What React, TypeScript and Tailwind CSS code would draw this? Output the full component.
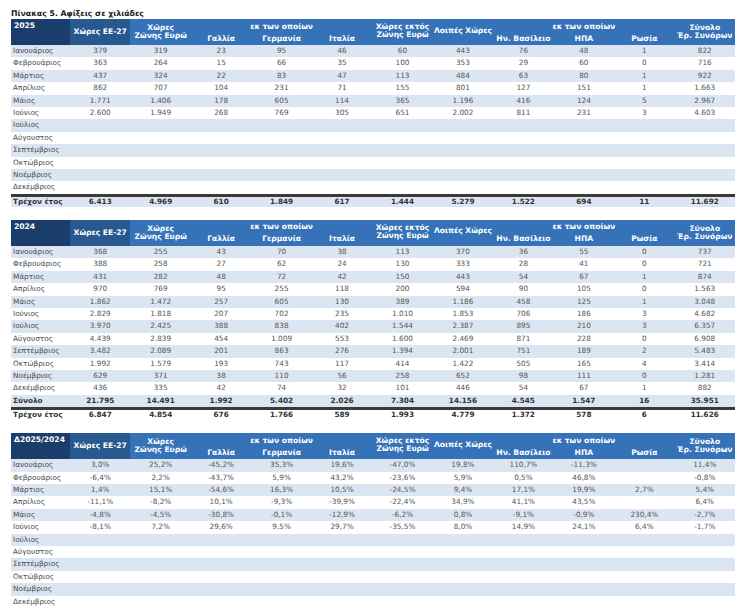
import React from "react";

type Row = { name: string; values: string[]; bold?: boolean; thickTop?: boolean };

const months = [
  "Ιανουάριος",
  "Φεβρουάριος",
  "Μάρτιος",
  "Απρίλιος",
  "Μάιος",
  "Ιούνιος",
  "Ιούλιος",
  "Αύγουστος",
  "Σεπτέμβριος",
  "Οκτώβριος",
  "Νοέμβριος",
  "Δεκέμβριος",
];

function withMonths(data: string[][]): Row[] {
  return months.map((m, i) => ({ name: m, values: data[i] ?? Array(11).fill("") }));
}

const rows2025: Row[] = [
  ...withMonths([
    ["379", "319", "23", "95", "46", "60", "443", "76", "48", "1", "822"],
    ["363", "264", "15", "66", "35", "100", "353", "29", "60", "0", "716"],
    ["437", "324", "22", "83", "47", "113", "484", "63", "80", "1", "922"],
    ["862", "707", "104", "231", "71", "155", "801", "127", "151", "1", "1.663"],
    ["1.771", "1.406", "178", "605", "114", "365", "1.196", "416", "124", "5", "2.967"],
    ["2.600", "1.949", "268", "769", "305", "651", "2.002", "811", "231", "3", "4.603"],
  ]),
  {
    name: "Τρέχον έτος",
    values: ["6.413", "4.969", "610", "1.849", "617", "1.444", "5.279", "1.522", "694", "11", "11.692"],
    bold: true,
    thickTop: true,
  },
];

const rows2024: Row[] = [
  ...withMonths([
    ["368", "255", "43", "70", "38", "113", "370", "36", "55", "0", "737"],
    ["388", "258", "27", "62", "24", "130", "333", "28", "41", "0", "721"],
    ["431", "282", "48", "72", "42", "150", "443", "54", "67", "1", "874"],
    ["970", "769", "95", "255", "118", "200", "594", "90", "105", "0", "1.563"],
    ["1.862", "1.472", "257", "605", "130", "389", "1.186", "458", "125", "1", "3.048"],
    ["2.829", "1.818", "207", "702", "235", "1.010", "1.853", "706", "186", "3", "4.682"],
    ["3.970", "2.425", "388", "838", "402", "1.544", "2.387", "895", "210", "3", "6.357"],
    ["4.439", "2.839", "454", "1.009", "553", "1.600", "2.469", "871", "228", "0", "6.908"],
    ["3.482", "2.089", "201", "863", "276", "1.394", "2.001", "751", "189", "2", "5.483"],
    ["1.992", "1.579", "193", "743", "117", "414", "1.422", "505", "165", "4", "3.414"],
    ["629", "371", "38", "110", "56", "258", "652", "98", "111", "0", "1.281"],
    ["436", "335", "42", "74", "32", "101", "446", "54", "67", "1", "882"],
  ]),
  {
    name: "Σύνολο",
    values: ["21.795", "14.491", "1.992", "5.402", "2.026", "7.304", "14.156", "4.545", "1.547", "16", "35.951"],
    bold: true,
  },
  {
    name: "Τρέχον έτος",
    values: ["6.847", "4.854", "676", "1.766", "589", "1.993", "4.779", "1.372", "578", "6", "11.626"],
    bold: true,
    thickTop: true,
  },
];

const rowsDelta: Row[] = withMonths([
  ["3,0%", "25,2%", "-45,2%", "35,3%", "19,6%", "-47,0%", "19,8%", "110,7%", "-11,3%", "", "11,4%"],
  ["-6,4%", "2,2%", "-43,7%", "5,9%", "43,2%", "-23,6%", "5,9%", "0,5%", "46,8%", "", "-0,8%"],
  ["1,4%", "15,1%", "-54,6%", "16,3%", "10,5%", "-24,5%", "9,4%", "17,1%", "19,9%", "2,7%", "5,4%"],
  ["-11,1%", "-8,2%", "10,1%", "-9,3%", "-39,9%", "-22,4%", "34,9%", "41,1%", "43,5%", "", "6,4%"],
  ["-4,8%", "-4,5%", "-30,8%", "-0,1%", "-12,9%", "-6,2%", "0,8%", "-9,1%", "-0,9%", "230,4%", "-2,7%"],
  ["-8,1%", "7,2%", "29,6%", "9,5%", "29,7%", "-35,5%", "8,0%", "14,9%", "24,1%", "6,4%", "-1,7%"],
]);

function ArrivalsTable({ label, rows }: { label: string; rows: Row[] }) {
  const th = "bg-[#3572b8] text-white font-bold text-center align-middle p-0 leading-[8px] text-[7.6px]";
  return (
    <table className="w-[724px] table-fixed border-collapse text-[7.3px]">
      <colgroup>
        <col className="w-[59px]" />
        {Array.from({ length: 11 }).map((_, i) => (
          <col key={i} />
        ))}
      </colgroup>
      <thead>
        <tr className="h-[13px]">
          <th
            rowSpan={2}
            className="bg-[#1b3d6b] text-white font-bold text-left align-top pl-[3px] pt-[3px] leading-[8px] text-[7.6px]"
          >
            {label}
          </th>
          <th rowSpan={2} className={`${th} bg-[#27598f]`}>
            Χώρες ΕΕ-27
          </th>
          <th rowSpan={2} className={th}>
            Χώρες
            <br />
            Ζώνης Ευρώ
          </th>
          <th colSpan={3} className={`${th} pt-[2px]`}>
            εκ των οποίων
          </th>
          <th rowSpan={2} className={`${th} pb-[2px]`}>
            Χώρες εκτός
            <br />
            Ζώνης Ευρώ
          </th>
          <th rowSpan={2} className={`${th} pb-[3px]`}>
            Λοιπές Χώρες
          </th>
          <th colSpan={3} className={`${th} pt-[2px]`}>
            εκ των οποίων
          </th>
          <th rowSpan={2} className={th}>
            Σύνολο
            <br />
            Έρ. Συνόρων
          </th>
        </tr>
        <tr className="h-[13px]">
          <th className={th}>Γαλλία</th>
          <th className={th}>Γερμανία</th>
          <th className={th}>Ιταλία</th>
          <th className={th}>Ην. Βασίλειο</th>
          <th className={th}>ΗΠΑ</th>
          <th className={th}>Ρωσία</th>
        </tr>
      </thead>
      <tbody>
        {rows.map((r, i) => {
          const stripe = i % 2 === 0 ? "bg-[#dce6f2]" : "bg-white";
          const h = r.thickTop ? "h-[10px] leading-[10px]" : "h-[12.4px] leading-[12.4px]";
          return (
            <React.Fragment key={r.name}>
              {r.thickTop && (
                <tr>
                  <td colSpan={12} className="h-[3px] p-0 bg-[#3a3a3a]" />
                </tr>
              )}
              <tr className={`${stripe} ${r.bold ? "font-bold text-[#333]" : "text-[#555]"}`}>
                <td className={`${h} p-0 pl-[2px] text-left whitespace-nowrap ${r.bold ? "text-[#333]" : "text-[#4a4a4a]"}`}>
                  {r.name}
                </td>
                {r.values.map((v, j) => (
                  <td key={j} className={`${h} p-0 text-center whitespace-nowrap`}>
                    {v}
                  </td>
                ))}
              </tr>
            </React.Fragment>
          );
        })}
      </tbody>
    </table>
  );
}

export default function App() {
  return (
    <div className="w-[750px] h-[610px] bg-white pl-[11px] pt-[9px] font-['DejaVu_Sans','Noto_Sans',sans-serif]">
      <div className="text-[7.8px] font-bold text-[#222] leading-[10px]">Πίνακας 5. Αφίξεις σε χιλιάδες</div>
      <div className="flex flex-col gap-[13px]">
        <ArrivalsTable label="2025" rows={rows2025} />
        <ArrivalsTable label="2024" rows={rows2024} />
        <ArrivalsTable label="Δ2025/2024" rows={rowsDelta} />
      </div>
    </div>
  );
}
